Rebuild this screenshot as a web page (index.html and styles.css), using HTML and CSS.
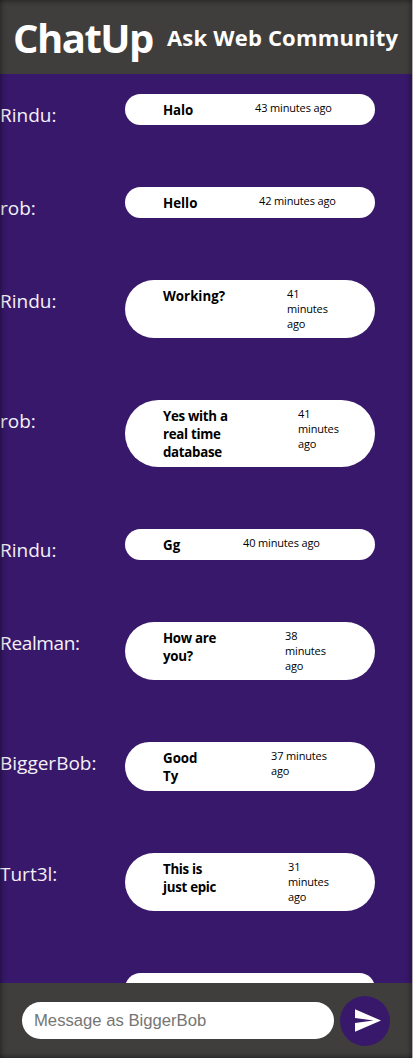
FILE: index.html
```html
<!DOCTYPE html>
<html lang="en">
<head>
<meta charset="utf-8">
<title>ChatUp</title>
<link rel="stylesheet" href="styles.css">
</head>
<body>
<div class="app">
  <header class="header">
    <h1 class="brand">ChatUp</h1>
    <h2 class="room">Ask Web Community</h2>
  </header>
  <main class="messages">
    <div class="message"><span class="author">Rindu:</span><div class="bubble"><p class="text text-wide">Halo</p><time class="time gap-halo">43 minutes ago</time></div></div>
    <div class="message"><span class="author">rob:</span><div class="bubble"><p class="text">Hello</p><time class="time gap-hello">42 minutes ago</time></div></div>
    <div class="message"><span class="author">Rindu:</span><div class="bubble"><p class="text">Working?</p><time class="time gap-working">41<br>minutes<br>ago</time></div></div>
    <div class="message"><span class="author">rob:</span><div class="bubble"><p class="text text-tight">Yes with a<br>real time<br>database</p><time class="time gap-yes">41<br>minutes<br>ago</time></div></div>
    <div class="message"><span class="author">Rindu:</span><div class="bubble"><p class="text">Gg</p><time class="time gap-gg">40 minutes ago</time></div></div>
    <div class="message"><span class="author author-tight">Realman:</span><div class="bubble"><p class="text text-tight">How are<br>you?</p><time class="time gap-how">38<br>minutes<br>ago</time></div></div>
    <div class="message"><span class="author">BiggerBob:</span><div class="bubble"><p class="text">Good<br>Ty</p><time class="time gap-good">37 minutes<br>ago</time></div></div>
    <div class="message"><span class="author">Turt3l:</span><div class="bubble"><p class="text text-tight">This is<br>just epic</p><time class="time gap-epic">31<br>minutes<br>ago</time></div></div>
    <div class="message"><span class="author"></span><div class="bubble"></div></div>
  </main>
  <footer class="composer">
    <input class="input" type="text" placeholder="Message as BiggerBob">
    <button class="send" aria-label="Send"><svg class="send-icon" viewBox="2 3 21 18"><path d="M2.01 21 23 12 2.01 3 2 10l15 2-15 2z" fill="#fff"/></svg></button>
  </footer>
</div>
</body>
</html>
```
FILE: styles.css
```css
* { box-sizing: border-box; margin: 0; padding: 0; }
body { background: #b0aeb0; font-family: "Open Sans", "Noto Sans", sans-serif; overflow: hidden; }
.app { position: relative; display: flex; flex-direction: column; width: 412px; height: 1058px; background: #38186a; }
.app::after { content: ""; position: absolute; inset: 0; box-shadow: inset 0 0 6px rgba(0, 0, 0, .6); pointer-events: none; }
.header { display: flex; align-items: center; gap: 14px; height: 74px; padding: 0 0 0 13px; background: #403e3c; color: #fff; white-space: nowrap; }
.brand { width: 140px; font-size: 40px; line-height: 53px; font-weight: 700; letter-spacing: -1.5px; }
.room { font-size: 22px; line-height: 30px; font-weight: 700; letter-spacing: .19px; }
.messages { flex: 1; min-height: 0; overflow: hidden; display: flex; flex-direction: column; gap: 62px; padding-top: 20px; }
.message { display: flex; flex: none; align-items: flex-start; }
.author { width: 125px; height: 27px; margin-top: 8px; margin-bottom: -10px; font-size: 19px; line-height: 27px; color: #f4f0f8; white-space: nowrap; }
.author-tight { letter-spacing: -.35px; }
.bubble { display: flex; align-items: flex-start; width: 250px; min-height: 31px; padding: 7px 0 6px 38px; border-radius: 50px; background: #fff; color: #000; white-space: nowrap; }
.text { width: 0; font-size: 13.3px; line-height: 18px; font-weight: 700; }
.text-wide { letter-spacing: -.1px; }
.text-tight { letter-spacing: -.3px; }
.time { font-size: 11px; line-height: 15px; letter-spacing: -.15px; margin-top: -1px; padding-bottom: 1px; }
.gap-halo { margin-left: 92px; }
.gap-hello { margin-left: 96px; }
.gap-working { margin-left: 124px; }
.gap-yes { margin-left: 135px; }
.gap-gg { margin-left: 80px; }
.gap-how { margin-left: 122px; }
.gap-good { margin-left: 108px; }
.gap-epic { margin-left: 125px; }
.composer { display: flex; align-items: center; gap: 6px; height: 75px; padding: 0 0 0 22px; background: #403e3c; }
.input { width: 312px; height: 37px; padding: 0 12px; border: 0; border-radius: 19px; background: #fff; font: 16.67px "Liberation Sans", Arial, sans-serif; }
.input::placeholder { color: #757575; }
.send { display: flex; align-items: center; width: 50px; height: 50px; padding-left: 15px; border: 0; border-radius: 50%; background: #38186a; }
.send-icon { width: 26px; height: 23px; }
```
